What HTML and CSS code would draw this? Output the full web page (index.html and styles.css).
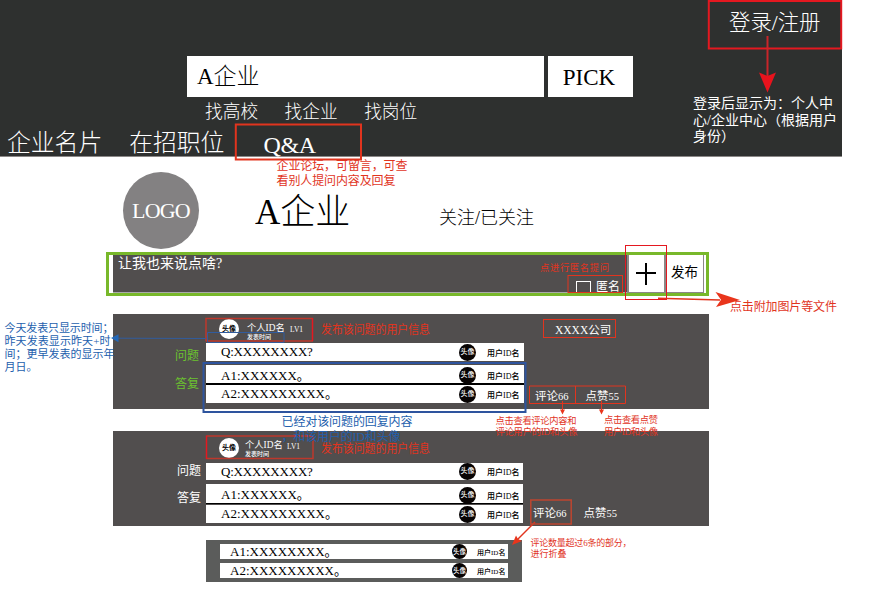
FILE: index.html
```html
<!DOCTYPE html>
<html lang="zh-CN">
<head>
<meta charset="utf-8">
<title>A企业 Q&amp;A</title>
<link rel="stylesheet" href="styles.css">
</head>
<body>
<div class="page">
  <header class="header">
    <div class="header-main">
      <div class="search"><div class="search-input">A企业</div><div class="pick">PICK</div></div>
      <div class="links"><span>找高校</span><span>找企业</span><span>找岗位</span></div>
      <nav class="nav"><span>企业名片</span><span>在招职位</span><span class="nav-qa">Q&amp;A</span></nav>
    </div>
    <div class="account">
      <div class="login">登录/注册</div>
      <div class="login-note">登录后显示为：个人中<br>心/企业中心（根据用户<br>身份）</div>
    </div>
  </header>

  <section class="company">
    <div class="logo">LOGO</div>
    <h1 class="company-name">A企业</h1>
    <div class="follow">关注/已关注</div>
  </section>

  <section class="compose">
    <div class="compose-text"><span>让我也来说点啥?</span><label class="anon"><i class="checkbox"></i>匿名</label></div>
    <div class="compose-add"><svg width="22" height="24" viewBox="0 0 22 24"><path d="M0 11H20M10 1V23" stroke="#000" stroke-width="2"/></svg></div>
    <div class="compose-send">发布</div>
  </section>

  <section class="panel first">
    <div class="labels"><span class="label">问题</span><span class="label">答复</span></div>
    <div class="thread">
      <div class="asker"><div class="face light">头像</div><div class="who"><span class="name">个人ID名</span><span class="time">发表时间</span></div><span class="level">LV1</span></div>
      <div class="row question"><span class="text">Q:XXXXXXXX?</span><span class="face">头像</span><span class="user">用户ID名</span></div>
      <div class="row answer"><span class="text">A1:XXXXXX。</span><span class="face">头像</span><span class="user">用户ID名</span></div>
      <div class="row answer last"><span class="text">A2:XXXXXXXXX。</span><span class="face">头像</span><span class="user">用户ID名</span></div>
    </div>
    <div class="side"><div class="firm">XXXX公司</div><div class="actions"><span>评论<b>66</b></span><span>点赞<b>55</b></span></div></div>
  </section>

  <section class="panel second">
    <div class="labels"><span class="label">问题</span><span class="label">答复</span></div>
    <div class="thread">
      <div class="asker"><div class="face light">头像</div><div class="who"><span class="name">个人ID名</span><span class="time">发表时间</span></div><span class="level">LV1</span></div>
      <div class="row question"><span class="text">Q:XXXXXXXX?</span><span class="face">头像</span><span class="user">用户ID名</span></div>
      <div class="row answer"><span class="text">A1:XXXXXX。</span><span class="face">头像</span><span class="user">用户ID名</span></div>
      <div class="row answer last"><span class="text">A2:XXXXXXXXX。</span><span class="face">头像</span><span class="user">用户ID名</span></div>
    </div>
    <div class="side"><div class="actions"><span>评论<b>66</b></span><span>点赞<b>55</b></span></div></div>
  </section>

  <section class="replies">
    <div class="row"><span class="text">A1:XXXXXXXX。</span><span class="face">头像</span><span class="user">用户ID名</span></div>
    <div class="row"><span class="text">A2:XXXXXXXXX。</span><span class="face">头像</span><span class="user">用户ID名</span></div>
  </section>

  <svg class="notes" width="887" height="593" viewBox="0 0 887 593">
    <g fill="none" stroke="#e41820">
      <rect x="708.8" y="1" width="132.4" height="47.5" stroke-width="2"/>
      <path d="M767.5 36V76" stroke="#c9252a" stroke-width="2"/>
      <rect x="625.5" y="245.5" width="41" height="54"/>
    </g>
    <path d="M759 72.5L767.5 76L776 72.5L767.5 92.5Z" fill="#e8131d"/>
    <g fill="none" stroke="#e1341e">
      <rect x="235.8" y="124.5" width="125.2" height="35" stroke-width="2"/>
      <rect x="568" y="275.5" width="54.5" height="17"/>
      <path d="M658 298.3L720 300" stroke-width="1.6"/>
      <rect x="543.5" y="319.5" width="72" height="18"/>
      <path d="M529.5 386H625.5V403.5H529.5ZM575.5 386V403.5"/>
      <path d="M562.5 401V411M601.5 401V411"/>
      <path d="M535 522L517 540" stroke-width="1.5"/>
      <rect x="530.8" y="500" width="40.4" height="24" stroke="#bd4630" stroke-width="1.5"/>
    </g>
    <g fill="none" stroke="#bd382c" stroke-width="1.5">
      <path d="M206 341.3V318.5H313M206 341H313"/>
      <path d="M206.5 436H313V458.5H206"/>
      <path d="M312.5 318V341M206.5 435.5V459" stroke="#e41820"/>
    </g>
    <g fill="#e9351c">
      <path d="M715.5 292L740 300L716 307L721 299.8Z"/>
      <path d="M560 409.5H565L562.5 414.5ZM599 409.5H604L601.5 414.5Z"/>
      <path d="M512 545L516 535.5L518 539L522 541Z"/>
    </g>
    <rect x="203.5" y="363" width="322" height="49" fill="none" stroke="#2e549e" stroke-width="2"/>
    <path d="M118 338.2L206 338.5M207.5 332.5H284V342.5H207.5Z" fill="none" stroke="#315c9d"/>
    <path d="M111 338L118.5 334.3V342.2Z" fill="#2468b8"/>

    <g class="blue n12">
      <text x="281.500" y="426" textLength="131">已经对该问题的回复内容</text>
      <text x="281.500" y="441" textLength="119">，和该用户的ID和头像</text>
    </g>
    <g class="red n12">
      <text x="276.500" y="170" textLength="131">企业论坛，可留言，可查</text>
      <text x="276.500" y="185" textLength="119">看别人提问内容及回复</text>
      <text x="730" y="311" textLength="107">点击附加图片等文件</text>
      <text x="321" y="334" textLength="109" lengthAdjust="spacingAndGlyphs">发布该问题的用户信息</text>
      <text x="321" y="452.500" textLength="109" lengthAdjust="spacingAndGlyphs">发布该问题的用户信息</text>
    </g>
    <g class="red n10">
      <text x="540" y="271" textLength="69">点进行匿名提问</text>
      <text x="495.500" y="424" textLength="81">点击查看评论内容和</text>
      <text x="495.500" y="435" textLength="82">评论用户的ID和头像</text>
      <text x="604" y="423" textLength="54">点击查看点赞</text>
      <text x="604" y="434.500" textLength="54">用户ID和头像</text>
    </g>
    <g class="red n9">
      <text x="530.500" y="546" textLength="101">评论数量超过6条的部分，</text>
      <text x="530.500" y="557" textLength="36">进行折叠</text>
    </g>
    <g class="blue n11">
      <text x="4.500" y="332" textLength="109">今天发表只显示时间；</text>
      <text x="4.500" y="345" textLength="106">昨天发表显示昨天+时</text>
      <text x="4.500" y="358" textLength="110">间；更早发表的显示年</text>
      <text x="4.500" y="371" textLength="33">月日。</text>
    </g>
  </svg>
</div>
</body>
</html>
```
FILE: styles.css
```css
* { box-sizing: border-box; }
body { margin: 0; background: #fff; font-family: "Liberation Serif", "Noto Sans CJK SC", serif; font-weight: 300; }
.page { position: relative; width: 887px; height: 593px; overflow: hidden; }
span, div, h1 { white-space: nowrap; }

.header { display: flex; width: 842px; height: 157px; background: #2e302f; border-bottom: 1px solid #8b8887; color: #fff; }
.header-main { width: 693px; padding-top: 56px; }
.search { display: flex; gap: 4px; height: 41px; margin-left: 187px; color: #000; font-size: 23px; line-height: 41px; }
.search-input { width: 357px; padding-left: 10px; background: #fff; }
.pick { width: 85px; background: #fff; text-align: center; padding-right: 3px; padding-top: 1px; }
.links { display: flex; gap: 26.500px; height: 28px; padding-left: 205px; font-size: 17.700px; line-height: 30px; }
.nav { display: flex; gap: 27px; padding-left: 7px; font-size: 23.800px; line-height: 36px; }
.nav-qa { margin-left: 12px; padding-top: 2px; font-size: 24px; letter-spacing: -.3px; }
.account { width: 149px; }
.login { padding-left: 36px; height: 96px; font-size: 21.400px; line-height: 46px; }
.login-note { font-size: 14px; line-height: 16.500px; font-weight: 400; }

.company { display: flex; height: 95px; padding: 15px 0 0 123px; }
.logo { width: 76px; height: 77px; border-radius: 50%; background: #838182; color: #fff; font-size: 22px; line-height: 77px; text-align: center; letter-spacing: -.8px; }
.company-name { width: 184px; margin: 0 0 0 56px; font-size: 35px; font-weight: 300; line-height: 81px; }
.follow { font-size: 18px; line-height: 93px; }

.compose { display: flex; width: 603px; height: 44px; margin-left: 106px; border: 3px solid #78b82a; padding: 0 2px 0 4px; font-size: 14px; font-weight: 400; }
.compose-text { display: flex; justify-content: space-between; width: 515px; height: 38px; padding: 0 7px 0 5px; background: #514e4e; border-bottom: 1px solid #aaa; color: #fff; line-height: 18px; }
.anon { display: flex; align-items: center; gap: 5px; padding-top: 26px; height: 38px; font-size: 12px; }
.checkbox { width: 15px; height: 12px; border: 1px solid #fff; }
.compose-add { display: flex; align-items: center; justify-content: center; width: 38px; height: 38px; border: solid #8b8887; border-width: 0 1px 1px 2px; }
.compose-send { width: 39px; height: 38px; border: solid #8b8887; border-width: 0 1px 1px 1px; text-align: center; line-height: 35px; font-size: 13.500px; }

.panel { display: flex; width: 596px; height: 95px; margin: 18px 0 0 113px; background: #514e4e; color: #fff; font-weight: 400; }
.panel.second { margin-top: 22px; }
.labels { display: flex; flex-direction: column; gap: 10px; width: 93px; padding: 33px 7px 0 0; align-items: flex-end; font-size: 12px; line-height: 18px; }
.first .label { color: #6cc22e; }
.second .labels { padding: 31px 5px 0 0; gap: 9px; }
.thread { width: 318px; }
.second .thread { width: 317px; }
.asker { display: flex; height: 29px; padding: 5px 0 0 13px; }
.second .asker { height: 32px; padding-top: 7px; }
.who { display: flex; flex-direction: column; width: 43px; margin-left: 8px; }
.second .who { margin-left: 6px; width: 42px; }
.name { font-size: 9.300px; line-height: 11px; padding-top: 4px; }
.second .name { padding-top: 2px; }
.time { font-size: 6px; line-height: 6px; font-weight: 500; }
.level { font-size: 7.500px; line-height: 21px; }
.second .level { line-height: 18px; }
.face { flex: none; width: 17px; height: 17px; border-radius: 50%; background: #080404; color: #fff; font-size: 7px; line-height: 17px; font-weight: 500; text-align: center; }
.face.light { width: 20px; height: 20px; background: #fff; color: #000; line-height: 20px; font-weight: 700; }
.row { display: flex; align-items: center; height: 18px; padding-left: 15px; background: #fff; color: #000; }
.text { width: 238px; font-size: 13px; line-height: 18px; }
.second .question .text, .first .question .text { letter-spacing: -.2px; }
.user { margin-left: 11px; font-size: 8px; font-weight: 500; }
.first .answer { margin-top: 4px; height: 19px; padding-top: 3px; border-bottom: 1px solid #000; }
.first .answer.last { margin-top: 0; border-top: 1px solid #000; border-bottom: 0; padding-top: 0; }
.second .row { height: 17px; }
.second .answer { margin-top: 4px; height: 20px; padding-top: 3px; border-bottom: 1px solid #000; }
.second .answer.last { margin-top: 1px; height: 18px; padding-top: 0; border: 0; }
.side { display: flex; flex-direction: column; justify-content: space-between; padding: 5px 0 3px 11px; font-size: 12px; line-height: 20px; }
.second .side { justify-content: flex-end; padding-left: 10px; padding-bottom: 3px; }
.firm { padding-left: 20px; font-size: 11.500px; line-height: 22px; }
.actions { display: flex; gap: 17px; font-size: 11.500px; line-height: 19px; }
.actions b { font-size: 10.500px; font-weight: 400; }

.replies { display: flex; flex-direction: column; gap: 4px; width: 316px; height: 42px; margin: 14px 0 0 206px; padding: 4px 14px; background: #5b5c5b; font-weight: 400; }
.replies .row { height: 15px; padding-left: 10px; }
.replies .text { width: 222px; padding-top: 1px; }
.replies .face { width: 15px; height: 15px; line-height: 15px; font-size: 6.500px; }
.replies .user { margin-left: 10px; font-size: 7px; }

.notes { position: absolute; left: 0; top: 0; font-weight: 400; }
.red { fill: #e1341e; }
.blue { fill: #2360ad; }
.n12 { font-size: 12px; }
.n11 { font-size: 11px; }
.n10 { font-size: 9.300px; }
.n9 { font-size: 9px; }
```
